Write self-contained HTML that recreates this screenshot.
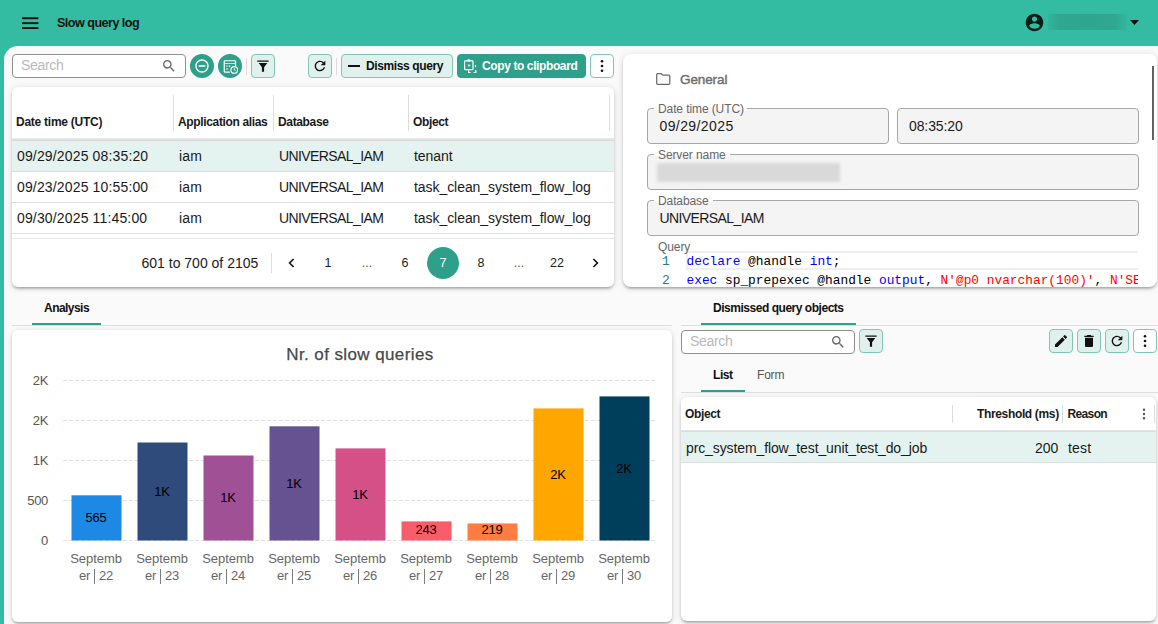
<!DOCTYPE html>
<html>
<head>
<meta charset="utf-8">
<title>Slow query log</title>
<style>
*{box-sizing:border-box;margin:0;padding:0}
html,body{width:1158px;height:624px;overflow:hidden}
body{background:#34bca3;font-family:"Liberation Sans",sans-serif;color:#1a1a1a;position:relative}
.abs{position:absolute}
.t{position:absolute;white-space:nowrap;line-height:1}
#content{position:absolute;left:4px;top:46px;width:1154px;height:578px;background:#fafafa;border-top-left-radius:14px}
.card{position:absolute;background:#fff;border-radius:6px;box-shadow:0 3px 3px -2px rgba(0,0,0,.2),0 2px 3px rgba(0,0,0,.14),0 1px 7px rgba(0,0,0,.12)}
.search{position:absolute;height:24px;background:#fff;border:1px solid #8f8f8f;border-radius:4px}
.btn{position:absolute;width:24px;height:24px;background:#e0f1ed;border:1px solid #7fc6b6;border-radius:4px}
.btn.w{background:#fff}
.circ{position:absolute;width:24px;height:24px;border-radius:50%;background:#2e9f88}
.vsep{position:absolute;width:1px;background:#dcdcdc}
.hsep{position:absolute;height:1px;background:#dedede}
.fld{position:absolute;background:#f4f4f4;border:1px solid #a6a6a6;border-radius:4px}
.lbl{position:absolute;background:#fff;height:4px}
.bar{position:absolute}
.grid{position:absolute;left:51px;width:592px;height:0;border-top:1px dashed #e2e2e2}
.xl{position:absolute;width:66px;text-align:center;font-size:13px;line-height:17px;color:#666;letter-spacing:-0.05px}
.xl span{letter-spacing:-0.2px}
.xl i{display:inline-block;width:1.300px;height:15px;background:#7c7c7c;vertical-align:-3.500px;margin:0 4px 0 3.500px}
.bl{position:absolute;width:50px;text-align:center;font-size:13px;line-height:14px;color:#000;letter-spacing:-0.3px}
.yl{position:absolute;width:30px;text-align:right;font-size:13px;line-height:14px;color:#555;letter-spacing:-0.33px}
</style>
</head>
<body>
<!-- header -->
<svg class="abs" style="left:22px;top:17px" width="17" height="12" viewBox="0 0 17 12"><rect x="0" y="0.3" width="16.4" height="1.9" fill="#111"/><rect x="0" y="5.2" width="16.4" height="1.9" fill="#111"/><rect x="0" y="10.1" width="16.4" height="1.9" fill="#111"/></svg>
<div class="t" style="left:57px;top:17px;font-size:12.6px;font-weight:bold;letter-spacing:-0.53px;color:#111">Slow query log</div>
<svg class="abs" style="left:1024.200px;top:12px" width="21" height="21" viewBox="0 0 24 24"><path fill="#0b1d19" d="M12 2C6.48 2 2 6.48 2 12s4.48 10 10 10 10-4.480 10-10S17.520 2 12 2zm0 3c1.660 0 3 1.340 3 3s-1.340 3-3 3-3-1.340-3-3 1.340-3 3-3zm0 14.200c-2.500 0-4.710-1.280-6-3.220.030-1.990 4-3.080 6-3.080 1.990 0 5.970 1.090 6 3.080-1.290 1.940-3.500 3.220-6 3.220z"/></svg>
<div class="abs" style="left:1048px;top:14px;width:79px;height:16px;background:linear-gradient(90deg,#33b49c,#2fa791 14%,#2ea58f 50%,#2fa791 84%,#34b69e)"></div>
<svg class="abs" style="left:1130px;top:20px" width="9" height="5" viewBox="0 0 9 5"><path d="M0 0h9L4.500 5z" fill="#111"/></svg>

<div id="content"></div>

<!-- ============ top-left toolbar ============ -->
<div class="search" style="left:12px;top:54px;width:174px"></div>
<div class="t" style="left:21px;top:58px;font-size:14px;letter-spacing:-0.31px;color:#b9b9b9">Search</div>
<svg class="abs" style="left:161px;top:58px" width="16" height="16" viewBox="0 0 24 24"><path fill="#666" d="M15.500 14h-.790l-.280-.270A6.470 6.470 0 0 0 16 9.500 6.500 6.500 0 1 0 9.500 16c1.610 0 3.090-.590 4.230-1.570l.270.280v.790l5 4.990L20.490 19l-4.990-5zm-6 0C7.010 14 5 11.990 5 9.500S7.010 5 9.500 5 14 7.010 14 9.500 11.990 14 9.500 14z"/></svg>
<div class="circ" style="left:190px;top:54px"></div>
<svg class="abs" style="left:194px;top:58px" width="16" height="16" viewBox="0 0 24 24"><path fill="#fff" d="M7 11v2h10v-2H7zm5-9C6.480 2 2 6.480 2 12s4.480 10 10 10 10-4.480 10-10S17.520 2 12 2zm0 18c-4.410 0-8-3.590-8-8s3.590-8 8-8 8 3.590 8 8-3.590 8-8 8z"/></svg>
<div class="circ" style="left:218px;top:54px"></div>
<svg class="abs" style="left:223px;top:59px" width="15" height="15" viewBox="0 0 24 24"><path fill="#fff" d="M3 2h16a2 2 0 0 1 2 2v8h-2V8H3v12h8v2H3a2 2 0 0 1-2-2V4a2 2 0 0 1 2-2zm0 1.600v3h16v-3H3zm2.300 6.600h2.200v2.200H5.300zm4 0h2.200v2.200H9.300zM5.300 14.800h2.200V17H5.300z"/><circle cx="18" cy="17.400" r="6.200" fill="#fff"/><circle cx="18" cy="17.400" r="4.400" fill="#2e9f88"/><path d="M17.300 14.600h1.400v2.400l1.700 1-.7 1.100-2.400-1.400z" fill="#fff"/></svg>
<div class="vsep" style="left:246px;top:58px;height:17px"></div>
<div class="btn" style="left:251px;top:54px"></div>
<svg class="abs" style="left:257px;top:60px" width="12" height="12" viewBox="0 0 12 12"><path fill="#111" d="M0.300 0.400h11.400v1.300H0.300zM1.700 3h8.600L7.100 7.300V11.700H4.900V7.300z"/></svg>
<div class="btn" style="left:308px;top:54px"></div>
<svg class="abs" style="left:312px;top:58px" width="16" height="16" viewBox="0 0 24 24"><path fill="#111" d="M17.650 6.350A7.958 7.958 0 0 0 12 4c-4.420 0-7.990 3.580-7.990 8s3.570 8 7.990 8c3.730 0 6.840-2.550 7.730-6h-2.080A5.990 5.990 0 0 1 12 18c-3.310 0-6-2.690-6-6s2.690-6 6-6c1.660 0 3.140.690 4.220 1.780L13 11h7V4l-2.350 2.350z"/></svg>
<div class="vsep" style="left:336px;top:58px;height:17px"></div>
<div class="btn" style="left:341px;top:54px;width:112px"></div>
<div class="abs" style="left:348px;top:65px;width:12px;height:2px;background:#111"></div>
<div class="t" style="left:366px;top:60px;font-size:12px;font-weight:bold;letter-spacing:-0.38px;color:#111">Dismiss query</div>
<div class="btn" style="left:457px;top:54px;width:129px;background:#2e9f88;border-color:#2e9f88"></div>
<svg class="abs" style="left:463px;top:58px" width="15" height="17" viewBox="0 0 15 17"><rect x="1.600" y="2.900" width="8.400" height="8.800" rx="0.800" fill="none" stroke="#fff" stroke-width="1.200"/><rect x="4.500" y="1.200" width="2.600" height="2.200" rx="0.600" fill="#fff"/><path fill="#fff" d="M4.800 6.400l3.400.500-1.800.800-.500 1.600z"/><path fill="none" stroke="#fff" stroke-width="1.200" d="M12.500 7v2.300M5.600 12.300v2.200h2M10.600 14.500h2.200v-2.600"/></svg>
<div class="t" style="left:482px;top:60px;font-size:12px;font-weight:bold;letter-spacing:-0.39px;color:#fff">Copy to clipboard</div>
<div class="btn w" style="left:590px;top:54px"></div>
<svg class="abs" style="left:600px;top:59px" width="4" height="14" viewBox="0 0 4 14"><circle cx="2" cy="2.200" r="1.300" fill="#111"/><circle cx="2" cy="7" r="1.300" fill="#111"/><circle cx="2" cy="11.800" r="1.300" fill="#111"/></svg>

<!-- ============ top-left table card ============ -->
<div class="card" style="left:12px;top:87px;width:602px;height:200px;overflow:hidden">
  <div class="abs" style="left:0;top:51px;width:602px;height:3px;background:linear-gradient(#ececec,#d6d6d6);z-index:2"></div>
  <div class="abs" style="left:0;top:54px;width:602px;height:31px;background:#e5f3f0;border-bottom:1px solid #d9dfde"></div>
  <div class="hsep" style="left:0;top:115px;width:602px"></div>
  <div class="hsep" style="left:0;top:146px;width:602px"></div>
  <div class="hsep" style="left:0;top:151px;width:602px;background:#e6e6e6"></div>
</div>
<div class="vsep" style="left:173px;top:95px;height:36px;z-index:3"></div>
<div class="vsep" style="left:273px;top:95px;height:36px;z-index:3"></div>
<div class="vsep" style="left:408px;top:95px;height:36px;z-index:3"></div>
<div class="vsep" style="left:609px;top:95px;height:36px;z-index:3"></div>
<div id="tl-text" style="position:absolute;left:0;top:0;z-index:4">
<div class="t" style="left:16px;top:116px;font-size:12px;font-weight:bold;letter-spacing:-0.25px">Date time (UTC)</div>
<div class="t" style="left:178px;top:116px;font-size:12px;font-weight:bold;letter-spacing:-0.35px">Application alias</div>
<div class="t" style="left:278px;top:116px;font-size:12px;font-weight:bold;letter-spacing:-0.35px">Database</div>
<div class="t" style="left:413px;top:116px;font-size:12px;font-weight:bold;letter-spacing:-0.35px">Object</div>

<div class="t r" style="left:17px;top:149px;font-size:14px;letter-spacing:0.15px">09/29/2025 08:35:20</div>
<div class="t r" style="left:179px;top:149px;font-size:14px;letter-spacing:0.15px">iam</div>
<div class="t r" style="left:279px;top:149px;font-size:14px;letter-spacing:-0.59px">UNIVERSAL_IAM</div>
<div class="t r" style="left:414px;top:149px;font-size:14px;letter-spacing:-0.06px">tenant</div>
<div class="t r" style="left:17px;top:180px;font-size:14px;letter-spacing:0.15px">09/23/2025 10:55:00</div>
<div class="t r" style="left:179px;top:180px;font-size:14px;letter-spacing:0.15px">iam</div>
<div class="t r" style="left:279px;top:180px;font-size:14px;letter-spacing:-0.59px">UNIVERSAL_IAM</div>
<div class="t r" style="left:414px;top:180px;font-size:14px;letter-spacing:-0.06px">task_clean_system_flow_log</div>
<div class="t r" style="left:17px;top:211px;font-size:14px;letter-spacing:0.15px">09/30/2025 11:45:00</div>
<div class="t r" style="left:179px;top:211px;font-size:14px;letter-spacing:0.15px">iam</div>
<div class="t r" style="left:279px;top:211px;font-size:14px;letter-spacing:-0.59px">UNIVERSAL_IAM</div>
<div class="t r" style="left:414px;top:211px;font-size:14px;letter-spacing:-0.06px">task_clean_system_flow_log</div>

<div class="t" style="left:141.500px;top:256px;font-size:14px">601 to 700 of 2105</div>
<div class="vsep" style="left:271px;top:253px;height:20px"></div>
<svg class="abs" style="left:288px;top:258px" width="7" height="10" viewBox="0 0 7 10"><path d="M5.600 1L1.600 5l4 4" fill="none" stroke="#111" stroke-width="1.600"/></svg>
<div class="t pg" style="left:309px;top:257px;width:38px;text-align:center;font-size:12.5px">1</div>
<div class="t pg" style="left:348px;top:257px;width:38px;text-align:center;font-size:12.5px;color:#555">...</div>
<div class="t pg" style="left:386px;top:257px;width:38px;text-align:center;font-size:12.5px">6</div>
<div class="abs" style="left:427px;top:247px;width:32px;height:32px;border-radius:50%;background:#2e9f88"></div>
<div class="t pg" style="left:424px;top:257px;width:38px;text-align:center;font-size:12.5px;color:#fff">7</div>
<div class="t pg" style="left:462px;top:257px;width:38px;text-align:center;font-size:12.5px">8</div>
<div class="t pg" style="left:500px;top:257px;width:38px;text-align:center;font-size:12.5px;color:#555">...</div>
<div class="t pg" style="left:538px;top:257px;width:38px;text-align:center;font-size:12.5px">22</div>
<svg class="abs" style="left:592px;top:258px" width="7" height="10" viewBox="0 0 7 10"><path d="M1.400 1l4 4-4 4" fill="none" stroke="#111" stroke-width="1.600"/></svg>
</div>

<!-- ============ top-right General card ============ -->
<div class="card" style="left:623px;top:54px;width:534px;height:233px;border-radius:8px"></div>
<svg class="abs" style="left:656px;top:73px" width="15" height="12" viewBox="0 0 15 12"><path d="M0.700 1.700a1 1 0 0 1 1-1h3.600l1.400 1.500h6.100a1 1 0 0 1 1 1v7.100a1 1 0 0 1-1 1H1.700a1 1 0 0 1-1-1z" fill="none" stroke="#6a6a6a" stroke-width="1.250"/></svg>
<div class="t" style="left:680px;top:73px;font-size:13.5px;-webkit-text-stroke:0.45px #707070;letter-spacing:-0.1px;color:#707070">General</div>

<div class="fld" style="left:647px;top:108px;width:242px;height:36px"></div>
<div class="lbl" style="left:654px;top:106px;width:93px"></div>
<div class="t" style="left:658px;top:103px;font-size:12px;color:#666;letter-spacing:-0.1px">Date time (UTC)</div>
<div class="t" style="left:659.500px;top:119px;font-size:14px;letter-spacing:0.4px">09/29/2025</div>
<div class="fld" style="left:897px;top:108px;width:242px;height:36px"></div>
<div class="t" style="left:909px;top:119px;font-size:14px;letter-spacing:-0.1px">08:35:20</div>

<div class="fld" style="left:647px;top:154px;width:492px;height:36px"></div>
<div class="lbl" style="left:654px;top:152px;width:76px"></div>
<div class="t" style="left:658px;top:149px;font-size:12px;color:#666;letter-spacing:-0.1px">Server name</div>
<div class="abs" style="left:657px;top:163px;width:183px;height:19px;background:#d9d9d9;filter:blur(1.500px)"></div>

<div class="fld" style="left:647px;top:200px;width:492px;height:36px"></div>
<div class="lbl" style="left:654px;top:198px;width:59px"></div>
<div class="t" style="left:658px;top:195px;font-size:12px;color:#666;letter-spacing:-0.1px">Database</div>
<div class="t" style="left:659.500px;top:211px;font-size:14px;letter-spacing:-0.6px">UNIVERSAL_IAM</div>

<div class="abs" style="left:686px;top:251px;width:452px;height:19px;border:2px solid #efefef;border-right:none"></div>
<div class="t" style="left:658px;top:241px;font-size:12px;color:#666;letter-spacing:-0.1px">Query</div>
<div id="code" style="position:absolute;left:0;top:0;width:1138px;height:287px;overflow:hidden;font-family:'Liberation Mono',monospace;font-size:12.830px">
<div class="t" style="left:662px;top:256px;color:#237893">1</div>
<div class="t" style="left:686.500px;top:256px;color:#000"><span style="color:#0000ff">declare</span> @handle <span style="color:#0000ff">int</span>;</div>
<div class="t" style="left:662px;top:275px;color:#237893">2</div>
<div class="t" style="left:686.500px;top:275px;color:#000"><span style="color:#0000ff">exec</span> sp_prepexec @handle <span style="color:#0000ff">output</span>, <span style="color:#ff0000">N'@p0 nvarchar(100)'</span>, <span style="color:#ff0000">N'SE</span></div>
</div>
<div class="abs" style="left:1152px;top:66px;width:2px;height:74px;background:#626262"></div>

<!-- ============ bottom-left: Analysis ============ -->
<div class="t" style="left:44px;top:302px;font-size:12px;font-weight:bold;letter-spacing:-0.54px;color:#111">Analysis</div>
<div class="abs" style="left:32px;top:323px;width:69px;height:2px;background:#2e9f88"></div>
<div class="hsep" style="left:12px;top:325px;width:660px"></div>
<div class="card" style="left:12px;top:330px;width:660px;height:292px" id="chart">
  <div class="t" style="left:0.500px;top:16px;width:695px;text-align:center;font-size:17px;color:#484848;-webkit-text-stroke:0.25px #484848;letter-spacing:0.4px">Nr. of slow queries</div>
  <svg class="abs" style="left:0;top:0" width="660" height="292" viewBox="0 0 660 292">
<path d="M51 50.5H643" stroke="#dedede" stroke-width="1" stroke-dasharray="4 2" fill="none"/>
<path d="M51 90.5H643" stroke="#dedede" stroke-width="1" stroke-dasharray="4 2" fill="none"/>
<path d="M51 130.5H643" stroke="#dedede" stroke-width="1" stroke-dasharray="4 2" fill="none"/>
<path d="M51 170.5H643" stroke="#dedede" stroke-width="1" stroke-dasharray="4 2" fill="none"/>
<path d="M51 210.5H643" stroke="#dedede" stroke-width="1" stroke-dasharray="4 2" fill="none"/>
<rect x="59.5" y="165.3" width="50" height="45.2" fill="#1e88e5"/>
<rect x="125.5" y="112.5" width="50" height="98.0" fill="#2f4b7c"/>
<rect x="191.5" y="125.5" width="50" height="85.0" fill="#a05195"/>
<rect x="257.5" y="96.3" width="50" height="114.2" fill="#665191"/>
<rect x="323.5" y="118.4" width="50" height="92.1" fill="#d45087"/>
<rect x="389.5" y="191.4" width="50" height="19.1" fill="#f95d6a"/>
<rect x="455.5" y="193.4" width="50" height="17.1" fill="#ff7c43"/>
<rect x="521.5" y="78.4" width="50" height="132.1" fill="#ffa600"/>
<rect x="587.5" y="66.4" width="50" height="144.1" fill="#003f5c"/>
</svg>
  <div class="yl" style="left:6px;top:44px">2K</div>
  <div class="yl" style="left:6px;top:84px">2K</div>
  <div class="yl" style="left:6px;top:124px">1K</div>
  <div class="yl" style="left:6px;top:164px">500</div>
  <div class="yl" style="left:6px;top:204px">0</div>


  <div class="bl" style="left:59px;top:181px">565</div>
  <div class="bl" style="left:125px;top:155px">1K</div>
  <div class="bl" style="left:191px;top:161px">1K</div>
  <div class="bl" style="left:257px;top:147px">1K</div>
  <div class="bl" style="left:323px;top:158px">1K</div>
  <div class="bl" style="left:389px;top:193px">243</div>
  <div class="bl" style="left:455px;top:193px">219</div>
  <div class="bl" style="left:521px;top:138px">2K</div>
  <div class="bl" style="left:587px;top:132px">2K</div>

  <div class="xl" style="left:51px;top:220px">Septemb<br><span>er<i></i>22</span></div>
  <div class="xl" style="left:117px;top:220px">Septemb<br><span>er<i></i>23</span></div>
  <div class="xl" style="left:183px;top:220px">Septemb<br><span>er<i></i>24</span></div>
  <div class="xl" style="left:249px;top:220px">Septemb<br><span>er<i></i>25</span></div>
  <div class="xl" style="left:315px;top:220px">Septemb<br><span>er<i></i>26</span></div>
  <div class="xl" style="left:381px;top:220px">Septemb<br><span>er<i></i>27</span></div>
  <div class="xl" style="left:447px;top:220px">Septemb<br><span>er<i></i>28</span></div>
  <div class="xl" style="left:513px;top:220px">Septemb<br><span>er<i></i>29</span></div>
  <div class="xl" style="left:579px;top:220px">Septemb<br><span>er<i></i>30</span></div>
</div>

<!-- ============ bottom-right: Dismissed query objects ============ -->
<div class="t" style="left:713px;top:302px;font-size:12px;font-weight:bold;letter-spacing:-0.47px;color:#111">Dismissed query objects</div>
<div class="abs" style="left:701px;top:323px;width:155px;height:2px;background:#2e9f88"></div>
<div class="hsep" style="left:681px;top:325px;width:477px"></div>
<div class="search" style="left:681px;top:330px;width:174px"></div>
<div class="t" style="left:690px;top:334px;font-size:14px;letter-spacing:-0.31px;color:#b9b9b9">Search</div>
<svg class="abs" style="left:830px;top:334px" width="16" height="16" viewBox="0 0 24 24"><path fill="#666" d="M15.500 14h-.790l-.280-.270A6.470 6.470 0 0 0 16 9.500 6.500 6.500 0 1 0 9.500 16c1.610 0 3.090-.590 4.230-1.570l.270.280v.790l5 4.990L20.490 19l-4.990-5zm-6 0C7.010 14 5 11.990 5 9.500S7.010 5 9.500 5 14 7.010 14 9.500 11.990 14 9.500 14z"/></svg>
<div class="btn" style="left:859px;top:329px"></div>
<svg class="abs" style="left:865px;top:335px" width="12" height="12" viewBox="0 0 12 12"><path fill="#111" d="M0.300 0.400h11.400v1.300H0.300zM1.700 3h8.600L7.100 7.300V11.700H4.900V7.300z"/></svg>

<div class="btn" style="left:1049px;top:329px"></div>
<svg class="abs" style="left:1053px;top:333px" width="16" height="16" viewBox="0 0 24 24"><path fill="#111" d="M3 17.250V21h3.750L17.810 9.940l-3.750-3.750L3 17.250zM20.710 7.040a.996.996 0 0 0 0-1.410l-2.340-2.340a.996.996 0 0 0-1.410 0l-1.830 1.830 3.750 3.750 1.830-1.830z"/></svg>
<div class="btn" style="left:1077px;top:329px"></div>
<svg class="abs" style="left:1081px;top:333px" width="16" height="16" viewBox="0 0 24 24"><path fill="#111" d="M6 19c0 1.100.900 2 2 2h8c1.100 0 2-.900 2-2V7H6v12zM19 4h-3.500l-1-1h-5l-1 1H5v2h14V4z"/></svg>
<div class="btn" style="left:1105px;top:329px"></div>
<svg class="abs" style="left:1109px;top:333px" width="16" height="16" viewBox="0 0 24 24"><path fill="#111" d="M17.650 6.350A7.958 7.958 0 0 0 12 4c-4.420 0-7.990 3.580-7.990 8s3.570 8 7.990 8c3.730 0 6.840-2.550 7.730-6h-2.080A5.990 5.990 0 0 1 12 18c-3.310 0-6-2.690-6-6s2.690-6 6-6c1.660 0 3.140.690 4.220 1.780L13 11h7V4l-2.350 2.350z"/></svg>
<div class="btn w" style="left:1133px;top:329px"></div>
<svg class="abs" style="left:1143px;top:334px" width="4" height="14" viewBox="0 0 4 14"><circle cx="2" cy="2.200" r="1.300" fill="#111"/><circle cx="2" cy="7" r="1.300" fill="#111"/><circle cx="2" cy="11.800" r="1.300" fill="#111"/></svg>

<div class="t" style="left:713px;top:369px;font-size:12px;font-weight:bold;letter-spacing:-0.44px;color:#111">List</div>
<div class="t" style="left:757px;top:369px;font-size:12px;color:#555;letter-spacing:-0.2px">Form</div>
<div class="abs" style="left:701px;top:390px;width:44px;height:2px;background:#2e9f88"></div>
<div class="hsep" style="left:681px;top:392px;width:477px"></div>

<div class="card" style="left:681px;top:397px;width:475px;height:224px;overflow:hidden">
  <div class="abs" style="left:0;top:33px;width:475px;height:2px;background:linear-gradient(#e9e9e9,#d8d8d8);z-index:2"></div>
  <div class="abs" style="left:0;top:35px;width:475px;height:31px;background:#e5f3f0;border-bottom:1px solid #d9dfde"></div>
</div>
<div class="vsep" style="left:952px;top:405px;height:18px;z-index:3"></div>
<div class="vsep" style="left:1062px;top:405px;height:18px;z-index:3"></div>
<div class="vsep" style="left:1154px;top:405px;height:18px;z-index:3"></div>
<div style="position:absolute;left:0;top:0;z-index:4">
<div class="t" style="left:685px;top:408px;font-size:12px;font-weight:bold;letter-spacing:-0.35px">Object</div>
<div class="t" style="left:977px;top:408px;font-size:12px;font-weight:bold;letter-spacing:-0.35px">Threshold (ms)</div>
<div class="t" style="left:1067.500px;top:408px;font-size:12px;font-weight:bold;letter-spacing:-0.64px">Reason</div>
<svg class="abs" style="left:1142px;top:408px" width="4" height="12" viewBox="0 0 4 12"><circle cx="2" cy="1.700" r="1.200" fill="#555"/><circle cx="2" cy="6" r="1.200" fill="#555"/><circle cx="2" cy="10.300" r="1.200" fill="#555"/></svg>
<div class="t r" style="left:686px;top:441px;font-size:14px;letter-spacing:-0.11px">prc_system_flow_test_unit_test_do_job</div>
<div class="t r" style="left:1035px;top:441px;font-size:14px;letter-spacing:-0.09px">200</div>
<div class="t r" style="left:1068px;top:441px;font-size:14px;letter-spacing:0.21px">test</div>
</div>
</body>
</html>
